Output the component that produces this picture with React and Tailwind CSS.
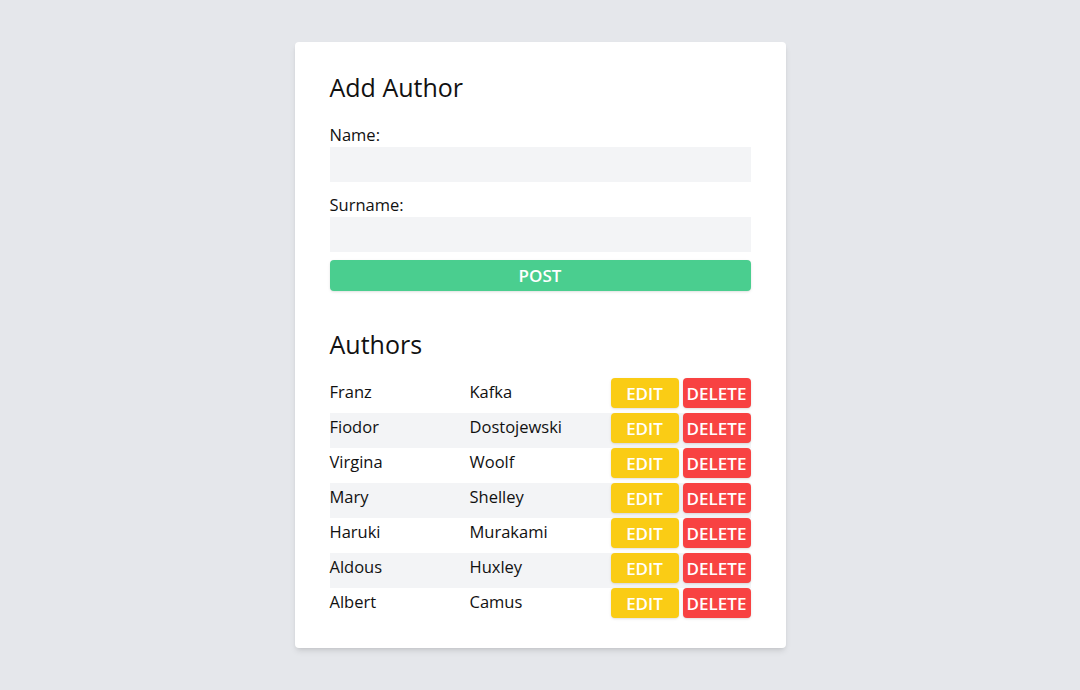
const authors = [
  ["Franz", "Kafka"],
  ["Fiodor", "Dostojewski"],
  ["Virgina", "Woolf"],
  ["Mary", "Shelley"],
  ["Haruki", "Murakami"],
  ["Aldous", "Huxley"],
  ["Albert", "Camus"],
];

export default function App() {
  return (
    <div className="min-h-[690px] bg-[#e5e7eb] pt-[42px] font-['Open_Sans',sans-serif] text-[#111]">
      <div className="mx-auto w-[491px] rounded bg-white px-[35px] pt-[30px] pb-[25px] shadow-md">
        {/* FORM */}
        <h2 className="text-[25px] leading-[30px]">Add Author</h2>
        <div className="mt-[21px]">
          <label className="block text-[16.5px] leading-6">Name:</label>
          <input className="block h-[35px] w-full bg-[#f3f4f6] px-2 outline-none" />
        </div>
        <div className="mt-[11px]">
          <label className="block text-[16.5px] leading-6">Surname:</label>
          <input className="block h-[35px] w-full bg-[#f3f4f6] px-2 outline-none" />
        </div>
        <button className="mt-2 h-[31px] w-full rounded bg-[#4ace8f] text-[17px] font-semibold text-white shadow-sm">
          POST
        </button>

        {/* LIST */}
        <h2 className="mt-[38px] text-[25px] leading-[30px]">Authors</h2>
        <table className="mt-[19px] w-full text-[16.5px]">
          <tbody>
            {authors.map(([name, surname], i) => (
              <tr key={surname} className={i % 2 === 1 ? "bg-[#f3f4f6]" : ""}>
                <td className="h-[35px] w-[140px] pb-[6px] align-middle">{name}</td>
                <td className="h-[35px] w-[141px] pb-[6px] align-middle">{surname}</td>
                <td className="h-[35px] align-top">
                  <div className="flex justify-end gap-1">
                    <button className="h-[30px] w-[68px] rounded bg-[#facc15] pt-[2px] text-[17px] font-semibold text-white shadow-sm">
                      EDIT
                    </button>
                    <button className="h-[30px] w-[68px] rounded bg-[#f84242] pt-[2px] text-[17px] font-semibold text-white shadow-sm">
                      DELETE
                    </button>
                  </div>
                </td>
              </tr>
            ))}
          </tbody>
        </table>
      </div>
    </div>
  );
}
